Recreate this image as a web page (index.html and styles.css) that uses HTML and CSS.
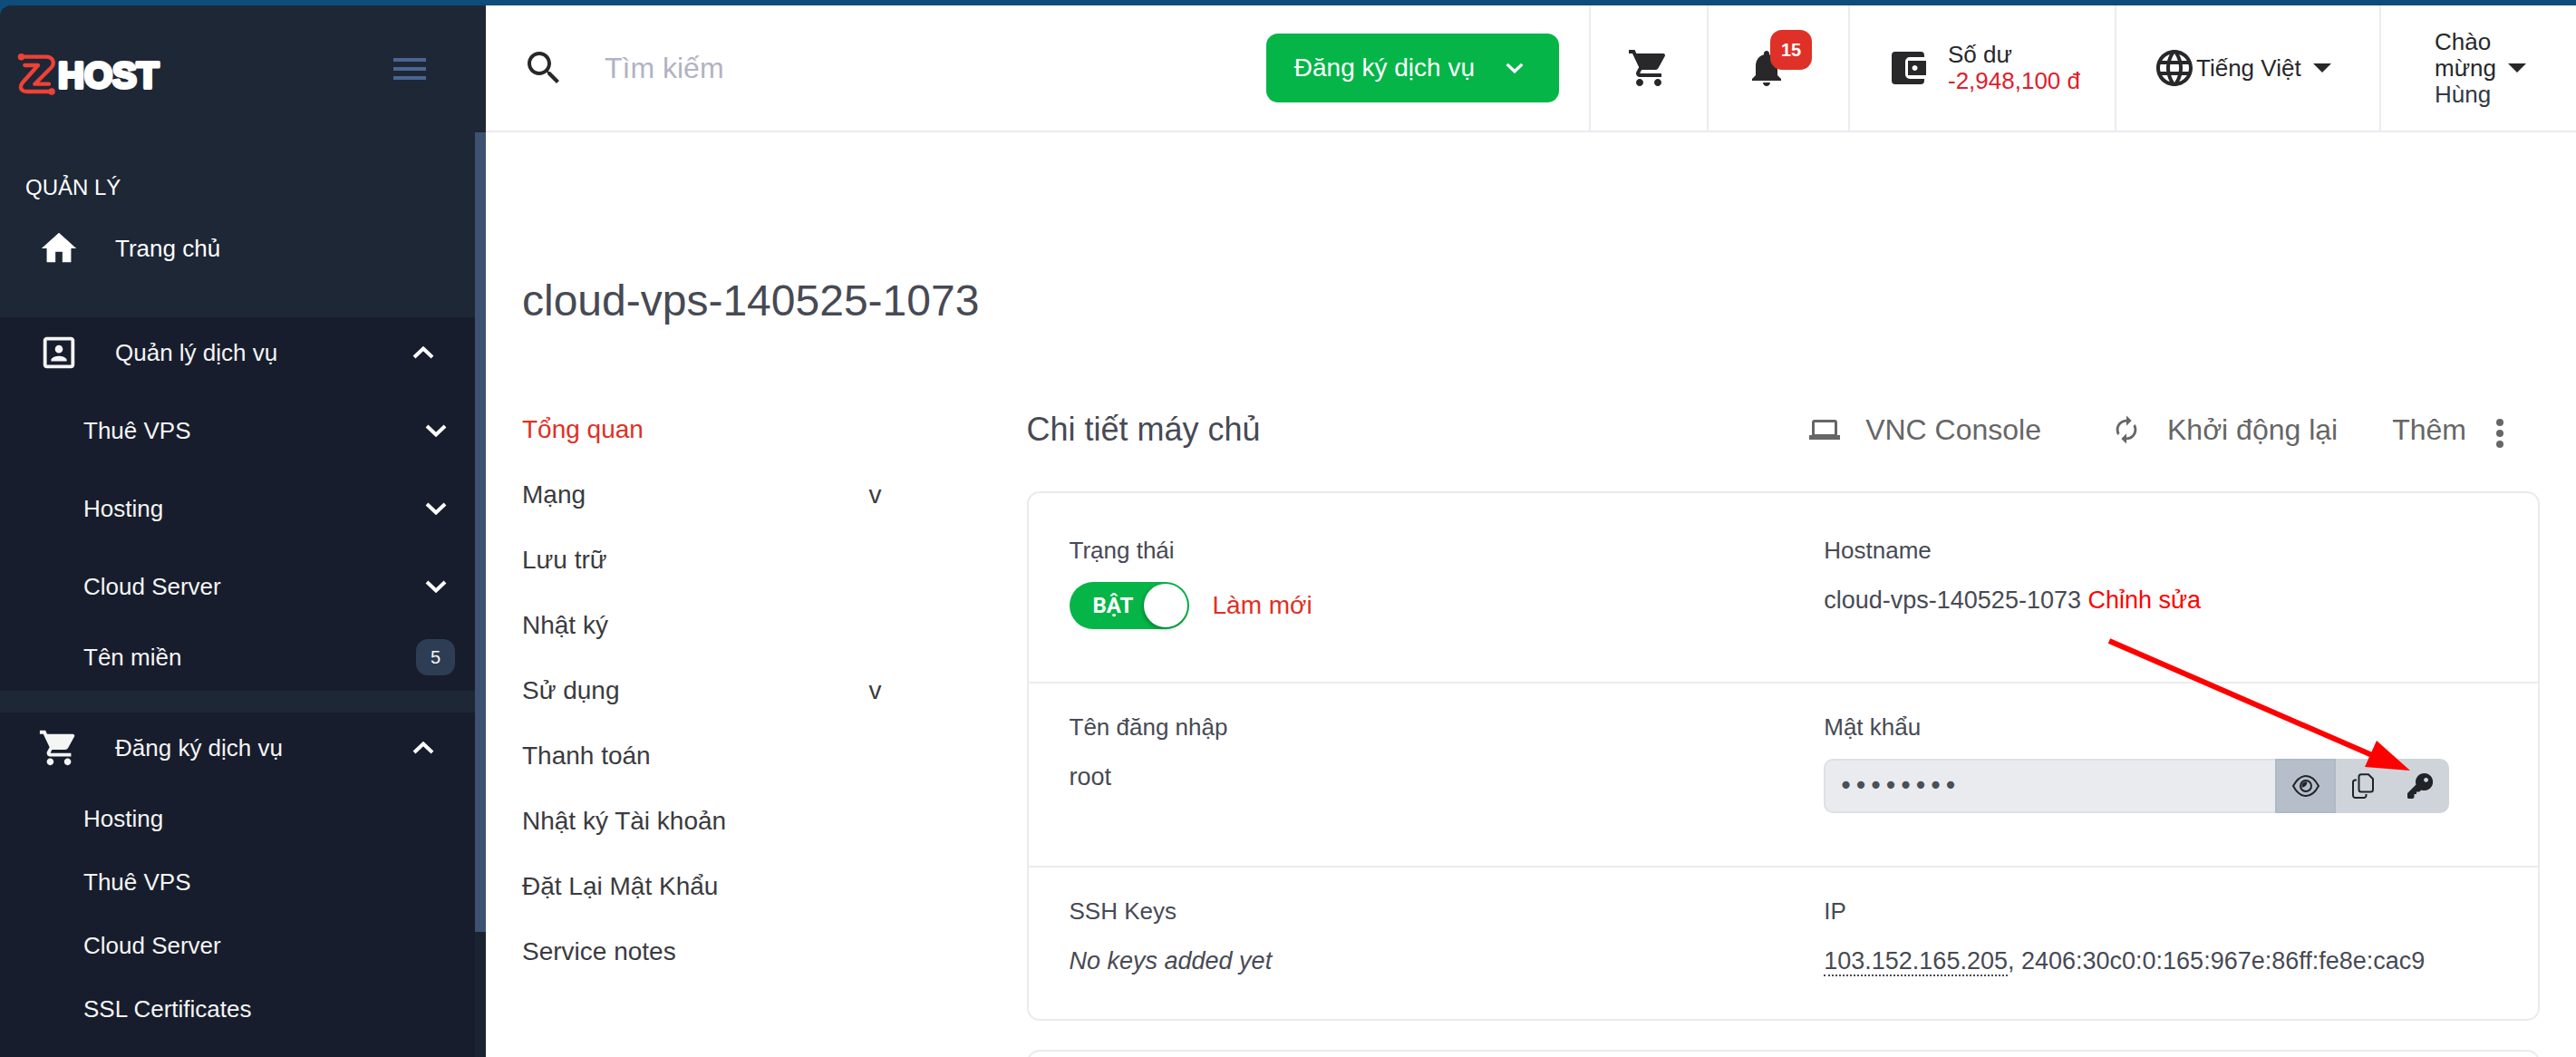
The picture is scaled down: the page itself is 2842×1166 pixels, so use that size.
FILE: index.html
```html
<!DOCTYPE html>
<html lang="vi">
<head>
    <meta charset="UTF-8">
    <meta name="viewport" content="width=device-width, initial-scale=1.0">
    <title>cloud-vps-140525-1073</title>
    <link rel="stylesheet" href="styles.css">
</head>
<body>
    <!-- Shared icons -->
    <svg class="icon-defs" aria-hidden="true">
        <symbol id="icon-cart" viewBox="0 0 24 24">
            <path d="M7 18c-1.1 0-1.99.9-1.99 2S5.9 22 7 22s2-.9 2-2-.9-2-2-2zM1 2v2h2l3.6 7.59-1.35 2.45c-.16.28-.25.61-.25.96 0 1.1.9 2 2 2h12v-2H7.42c-.14 0-.25-.11-.25-.25l.03-.12.9-1.63h7.45c.75 0 1.41-.41 1.75-1.03l3.58-6.49c.08-.14.12-.31.12-.48 0-.55-.45-1-1-1H5.21l-.94-2H1zm16 16c-1.1 0-1.99.9-1.99 2s.89 2 1.99 2 2-.9 2-2-.9-2-2-2z"/>
        </symbol>
        <symbol id="icon-down" viewBox="0 0 24 14">
            <path d="M2 2l10 9.5L22 2" fill="none" stroke="currentColor" stroke-width="4"/>
        </symbol>
        <symbol id="icon-up" viewBox="0 0 24 14">
            <path d="M2 12l10-9.5L22 12" fill="none" stroke="currentColor" stroke-width="4"/>
        </symbol>
        <symbol id="icon-caret" viewBox="0 0 20 10">
            <path d="M0 0h20L10 10z"/>
        </symbol>
    </svg>

    <div class="app">
        <!-- Sidebar -->
        <aside class="sidebar">
            <div class="sidebar-top">
                <a class="logo" href="#home">
                    <svg viewBox="0 0 164 48">
                        <g fill="none" stroke="#ef4136" stroke-width="4.3" stroke-linecap="round" stroke-linejoin="round">
                            <path d="M4 4.7H32C39 4.7 42 11 38 16L19.3 34.7H35"/>
                            <path d="M8.3 14H23L6 33C2 38 4 43 11 43H38"/>
                        </g>
                        <circle cx="4.5" cy="4.7" r="3.8" fill="#ef4136"/>
                        <circle cx="38" cy="43" r="3.8" fill="#ef4136"/>
                        <text class="logo-text" x="45" y="39">HOST</text>
                    </svg>
                </a>
                <button class="menu-toggle" type="button" aria-label="Menu"><span></span><span></span><span></span></button>
            </div>
            <div class="sidebar-body">
                <nav class="sidebar-nav">
                    <h2>QUẢN LÝ</h2>
                    <a class="nav-head nav-home" href="#home">
                        <svg class="nav-icon" viewBox="0 0 24 24" aria-hidden="true"><path d="M10 20v-6h4v6h5v-8h3L12 3 2 12h3v8z"/></svg>
                        <span>Trang chủ</span>
                    </a>
                    <div class="nav-group">
                        <a class="nav-head" href="#services">
                            <svg class="nav-icon" viewBox="0 0 24 24" aria-hidden="true"><path d="M12 12.25c1.24 0 2.25-1.01 2.25-2.25S13.24 7.75 12 7.75 9.75 8.76 9.75 10s1.01 2.25 2.25 2.25zm4.5 4c0-1.5-3-2.25-4.5-2.25s-4.5.75-4.5 2.25V17h9v-.75zM19 3H5c-1.1 0-2 .9-2 2v14c0 1.1.9 2 2 2h14c1.1 0 2-.9 2-2V5c0-1.1-.9-2-2-2zm0 16H5V5h14v14z"/></svg>
                            <span>Quản lý dịch vụ</span>
                            <svg class="chevron"><use href="#icon-up"/></svg>
                        </a>
                        <ul>
                            <li><a class="has-children" href="#vps">Thuê VPS <svg class="chevron"><use href="#icon-down"/></svg></a></li>
                            <li><a class="has-children" href="#hosting">Hosting <svg class="chevron"><use href="#icon-down"/></svg></a></li>
                            <li><a class="has-children" href="#cloud">Cloud Server <svg class="chevron"><use href="#icon-down"/></svg></a></li>
                            <li><a href="#domains">Tên miền <span class="count">5</span></a></li>
                        </ul>
                    </div>
                    <div class="nav-group">
                        <a class="nav-head" href="#order">
                            <svg class="nav-icon" aria-hidden="true"><use href="#icon-cart"/></svg>
                            <span>Đăng ký dịch vụ</span>
                            <svg class="chevron"><use href="#icon-up"/></svg>
                        </a>
                        <ul>
                            <li><a href="#order-hosting">Hosting</a></li>
                            <li><a href="#order-vps">Thuê VPS</a></li>
                            <li><a href="#order-cloud">Cloud Server</a></li>
                            <li><a href="#order-ssl">SSL Certificates</a></li>
                        </ul>
                    </div>
                </nav>
                <div class="scroll-track"><div class="scroll-thumb"></div></div>
            </div>
        </aside>

        <div class="page">
            <!-- Top bar -->
            <header class="topbar">
                <form class="search">
                    <label for="search-input">
                        <svg class="icon" viewBox="0 0 24 24" role="img" aria-label="Tìm kiếm"><path d="M15.5 14h-.79l-.28-.27C15.41 12.59 16 11.11 16 9.5 16 5.91 13.09 3 9.5 3S3 5.91 3 9.5 5.91 16 9.5 16c1.61 0 3.09-.59 4.23-1.57l.27.28v.79l5 4.99L20.49 19l-4.99-5zm-6 0C7.01 14 5 11.99 5 9.5S7.01 5 9.5 5 14 7.01 14 9.5 11.99 14 9.5 14z"/></svg>
                    </label>
                    <input type="text" id="search-input" placeholder="Tìm kiếm">
                </form>
                <button class="order-btn" type="button">Đăng ký dịch vụ <svg><use href="#icon-down"/></svg></button>
                <a class="cell cell-cart" href="#cart" aria-label="Cart"><svg class="icon"><use href="#icon-cart"/></svg></a>
                <a class="cell cell-bell" href="#notifications">
                    <svg class="icon" viewBox="0 0 24 24" aria-hidden="true"><path d="M12 22c1.1 0 2-.9 2-2h-4c0 1.1.89 2 2 2zm6-6v-5c0-3.07-1.64-5.64-4.5-6.32V4c0-.83-.67-1.5-1.5-1.5s-1.5.67-1.5 1.5v.68C7.63 5.36 6 7.92 6 11v5l-2 2v1h16v-1l-2-2z"/></svg>
                    <span class="bell-count">15</span>
                </a>
                <a class="cell cell-balance" href="#balance">
                    <svg viewBox="0 0 38 36" aria-hidden="true">
                        <path d="M4 0h28a4 4 0 0 1 4 4v2H20a5 5 0 0 0-5 5v14a5 5 0 0 0 5 5h16v2a4 4 0 0 1-4 4H4a4 4 0 0 1-4-4V4a4 4 0 0 1 4-4z"/>
                        <path fill-rule="evenodd" d="M18 10h20v16H18zM25.5 15a3 3 0 1 0 .1 0z"/>
                    </svg>
                    <span>Số dư<br><span class="amount">-2,948,100 đ</span></span>
                </a>
                <div class="cell cell-lang">
                    <label for="lang">
                        <svg class="icon" viewBox="0 0 24 24" role="img" aria-label="Ngôn ngữ"><path d="M11.99 2C6.47 2 2 6.48 2 12s4.47 10 9.99 10C17.52 22 22 17.52 22 12S17.52 2 11.99 2zm6.93 6h-2.95c-.32-1.25-.78-2.45-1.38-3.56 1.84.63 3.37 1.91 4.33 3.56zM12 4.04c.83 1.2 1.48 2.53 1.91 3.96h-3.82c.43-1.43 1.08-2.76 1.91-3.96zM4.26 14C4.1 13.36 4 12.69 4 12s.1-1.36.26-2h3.38c-.08.66-.14 1.32-.14 2s.06 1.34.14 2H4.26zm.82 2h2.95c.32 1.25.78 2.45 1.38 3.56-1.84-.63-3.37-1.9-4.33-3.56zm2.95-8H5.08c.96-1.66 2.49-2.93 4.33-3.56C8.81 5.55 8.35 6.75 8.03 8zM12 19.96c-.83-1.2-1.48-2.53-1.91-3.96h3.82c-.43 1.43-1.08 2.76-1.91 3.96zM14.34 14H9.66c-.09-.66-.16-1.32-.16-2s.07-1.35.16-2h4.68c.09.65.16 1.32.16 2s-.07 1.34-.16 2zm.25 5.56c.6-1.11 1.06-2.31 1.38-3.56h2.95c-.96 1.65-2.49 2.93-4.33 3.56zM16.36 14c.08-.66.14-1.32.14-2s-.06-1.34-.14-2h3.38c.16.64.26 1.31.26 2s-.1 1.36-.26 2h-3.38z"/></svg>
                    </label>
                    <select id="lang"><option>Tiếng Việt</option></select>
                    <svg class="caret" aria-hidden="true"><use href="#icon-caret"/></svg>
                </div>
                <button class="cell cell-user" type="button">
                    <span>Chào<br>mừng<br><span class="user-name">Hùng</span></span>
                    <svg class="caret" aria-hidden="true"><use href="#icon-caret"/></svg>
                </button>
            </header>

            <main class="content">
                <h1>cloud-vps-140525-1073</h1>
                <div class="columns">
                    <!-- Service menu -->
                    <nav class="service-menu">
                        <a class="active" href="#overview">Tổng quan</a>
                        <a href="#network">Mạng <span>v</span></a>
                        <a href="#storage">Lưu trữ</a>
                        <a href="#logs">Nhật ký</a>
                        <a href="#usage">Sử dụng <span>v</span></a>
                        <a href="#billing">Thanh toán</a>
                        <a href="#account-logs">Nhật ký Tài khoản</a>
                        <a href="#reset">Đặt Lại Mật Khẩu</a>
                        <a href="#notes">Service notes</a>
                    </nav>

                    <!-- Server details -->
                    <section>
                        <div class="section-head">
                            <h2>Chi tiết máy chủ</h2>
                            <div class="actions">
                                <button type="button">
                                    <svg viewBox="0 0 34 34" aria-hidden="true"><path fill-rule="evenodd" d="M6 6h22a3 3 0 0 1 3 3v14h3v5H0v-5h3V9a3 3 0 0 1 3-3zM6 9v13h22V9z"/></svg>
                                    VNC Console
                                </button>
                                <button type="button">
                                    <svg viewBox="0 0 24 24" aria-hidden="true"><path d="M12 6v3l4-4-4-4v3c-4.42 0-8 3.58-8 8 0 1.57.46 3.03 1.24 4.26L6.7 14.8c-.45-.83-.7-1.79-.7-2.8 0-3.31 2.69-6 6-6zm6.76 1.74L17.3 9.2c.44.84.7 1.79.7 2.8 0 3.31-2.69 6-6 6v-3l-4 4 4 4v-3c4.42 0 8-3.58 8-8 0-1.57-.46-3.03-1.24-4.26z"/></svg>
                                    Khởi động lại
                                </button>
                                <button class="more" type="button">
                                    Thêm
                                    <svg class="dots" viewBox="0 0 10 40" aria-hidden="true"><circle cx="5" cy="12" r="4"/><circle cx="5" cy="24" r="4"/><circle cx="5" cy="36" r="4"/></svg>
                                </button>
                            </div>
                        </div>

                        <div class="card">
                            <div class="row row-first">
                                <div class="field">
                                    <div class="label">Trạng thái</div>
                                    <div class="control status">
                                        <label class="switch">
                                            <input type="checkbox" aria-label="Trạng thái" checked>
                                            <span>BẬT</span>
                                        </label>
                                        <a href="#refresh">Làm mới</a>
                                    </div>
                                </div>
                                <div class="field">
                                    <div class="label">Hostname</div>
                                    <div class="value">cloud-vps-140525-1073 <a href="#edit">Chỉnh sửa</a></div>
                                </div>
                            </div>
                            <div class="row">
                                <div class="field">
                                    <div class="label">Tên đăng nhập</div>
                                    <div class="value">root</div>
                                </div>
                                <div class="field">
                                    <label class="label" for="password">Mật khẩu</label>
                                    <div class="control password">
                                        <input type="password" id="password" value="password" readonly>
                                        <button class="show-btn" type="button" aria-label="Show">
                                            <svg class="line-icon" width="32" height="32" viewBox="0 0 32 32">
                                                <path d="M2 16C6 8.5 10.500 5 16 5s10 3.500 14 11c-4 7.500-8.500 11-14 11S6 23.500 2 16z"/>
                                                <circle cx="16" cy="16" r="6"/>
                                                <path d="M11.500 15.500a4 4 0 0 0 4-4" stroke-width="4"/>
                                            </svg>
                                        </button>
                                        <button class="copy-btn" type="button" aria-label="Copy">
                                            <svg class="line-icon" width="24" height="28" viewBox="0 0 24 28">
                                                <path d="M10 1.200h8l5 5V18a2.500 2.500 0 0 1-2.500 2.500H10A2.500 2.500 0 0 1 7.500 18V3.700A2.500 2.500 0 0 1 10 1.200z"/>
                                                <path d="M5 7.500H3.500A2.500 2.500 0 0 0 1 10v14.500A2.500 2.500 0 0 0 3.500 27H13a2.500 2.500 0 0 0 2.500-2.500V23"/>
                                            </svg>
                                        </button>
                                        <button class="key-btn" type="button" aria-label="Key">
                                            <svg width="28" height="28" viewBox="0 0 28 28">
                                                <path fill-rule="evenodd" d="M18.500 0a9.500 9.500 0 1 1-3.200 18.400L13 20.500h-3V23H7.500v3.500L6 28H1l-1-1v-5l9.500-9.500A9.500 9.500 0 0 1 18.500 0zM20.500 5a2.400 2.400 0 1 0 .1 0z"/>
                                            </svg>
                                        </button>
                                        <svg class="arrow" width="338" height="152" viewBox="0 0 338 152" aria-hidden="true">
                                            <path d="M4 5L294 131" stroke="#f00" stroke-width="6"/>
                                            <path d="M299 115L336 148L286 144z" fill="#f00"/>
                                        </svg>
                                    </div>
                                </div>
                            </div>
                            <div class="row row-last">
                                <div class="field">
                                    <div class="label">SSH Keys</div>
                                    <div class="value"><em>No keys added yet</em></div>
                                </div>
                                <div class="field">
                                    <div class="label">IP</div>
                                    <div class="value"><span class="ip">103.152.165.205</span>, 2406:30c0:0:165:967e:86ff:fe8e:cac9</div>
                                </div>
                            </div>
                        </div>
                        <div class="card card-next"></div>
                    </section>
                </div>
            </main>
        </div>
    </div>
</body>
</html>
```

FILE: styles.css
```css
/* Global Styles */
* {
    box-sizing: border-box;
}

body {
    margin: 0;
    font-family: "Liberation Sans", Arial, sans-serif;
    font-size: 26px;
    line-height: 32px;
    color: #474a54;
    background-color: #0e4c7c;
}

a {
    color: inherit;
    text-decoration: none;
}

button, input, select {
    font: inherit;
    color: inherit;
    background: none;
    border: none;
    padding: 0;
    margin: 0;
    outline: none;
}

button {
    cursor: pointer;
}

h1, h2 {
    margin: 0;
    font-weight: normal;
}

ul {
    list-style: none;
    margin: 0;
    padding: 0;
}

svg {
    display: block;
    flex: none;
    fill: currentColor;
}

.icon-defs {
    display: none;
}

.line-icon {
    fill: none;
    stroke: currentColor;
    stroke-width: 2px;
}

.app {
    display: flex;
    height: 100vh;
    padding-top: 6px;
    overflow: hidden;
}

/* Sidebar */
.sidebar {
    display: flex;
    flex-direction: column;
    flex: none;
    width: 536px;
    color: #fff;
    background-color: #1e2736;
    border-top-left-radius: 12px;
}

.sidebar-top {
    display: flex;
    flex: none;
    justify-content: space-between;
    align-items: center;
    height: 140px;
    padding: 0 66px 0 19px;
}

.logo {
    padding-top: 12px;
}

.logo svg {
    width: 164px;
    height: 48px;
}

.logo-text {
    font-size: 40px;
    font-weight: bold;
    stroke: #fff;
    stroke-width: 4px;
    stroke-linejoin: round;
}

.menu-toggle {
    display: flex;
    flex-direction: column;
    gap: 6px;
}

.menu-toggle span {
    width: 36px;
    height: 4px;
    background-color: #4a6691;
}

.sidebar-body {
    display: flex;
    flex: 1;
    min-height: 0;
}

.sidebar-nav {
    flex: 1;
    overflow: hidden;
}

.sidebar-nav h2 {
    padding: 45px 28px 12px;
    font-size: 24px;
}

.nav-head {
    display: flex;
    align-items: center;
    gap: 39px;
    height: 78px;
    padding: 0 45px 0 42px;
}

.nav-home {
    margin-bottom: 37px;
}

.nav-icon {
    width: 46px;
    height: 46px;
}

.nav-group {
    margin-bottom: 24px;
    padding-bottom: 2px;
    color: #f5f5f5;
    background-color: #171d2c;
}

.nav-group:last-child {
    padding-bottom: 60px;
}

.nav-group ul {
    padding-top: 4px;
}

.nav-group li a {
    display: flex;
    justify-content: space-between;
    align-items: center;
    height: 70px;
    padding: 0 22px 0 92px;
}

.nav-group li .has-children {
    height: 86px;
}

.chevron {
    width: 24px;
    height: 14px;
    margin-left: auto;
    color: #fff;
}

.has-children .chevron {
    margin-right: 9px;
}

.count {
    width: 43px;
    border-radius: 13px;
    font-size: 20px;
    line-height: 40px;
    text-align: center;
    background-color: #2d3d54;
}

.scroll-track {
    width: 12px;
    background-color: #1a2431;
}

.scroll-thumb {
    height: calc(100% - 138px);
    background-color: #3d5171;
}

/* Top bar */
.page {
    flex: 1;
    min-width: 0;
    background-color: #fff;
    overflow: hidden;
}

.topbar {
    display: flex;
    align-items: center;
    height: 140px;
    border-bottom: 2px solid #ebebf0;
    color: #28282a;
}

.icon {
    width: 48px;
    height: 48px;
}

.search {
    display: flex;
    flex: 1;
    align-items: center;
    gap: 43px;
    padding-left: 40px;
}

.search input {
    flex: 1;
    min-width: 0;
    height: 48px;
    font-size: 32px;
}

.search input::placeholder {
    color: #b1b3c3;
}

.order-btn {
    display: flex;
    align-items: center;
    gap: 34px;
    height: 76px;
    margin-right: 33px;
    padding: 0 39px 0 31px;
    border-radius: 13px;
    font-size: 28px;
    color: #fff;
    background-color: #05b548;
}

.order-btn svg {
    width: 20px;
    height: 12px;
}

.cell {
    display: flex;
    flex: none;
    align-items: center;
    align-self: stretch;
    border-left: 2px solid #ebebf0;
    line-height: 29px;
}

.cell-cart {
    width: 130px;
    padding-left: 40px;
}

.cell-bell {
    position: relative;
    width: 156px;
    padding-left: 40px;
}

.bell-count {
    position: absolute;
    top: 27px;
    left: 68px;
    width: 46px;
    border-radius: 13px;
    font-size: 20px;
    font-weight: bold;
    line-height: 44px;
    text-align: center;
    color: #fff;
    background-color: #df3127;
}

.cell-balance {
    width: 294px;
    gap: 24px;
    padding-left: 46px;
}

.cell-balance svg {
    width: 38px;
    height: 36px;
}

.amount {
    color: #e0202c;
}

.cell-lang {
    width: 292px;
    padding-left: 40px;
}

.cell-lang select {
    appearance: none;
    cursor: pointer;
}

.caret {
    width: 20px;
    height: 10px;
    margin-left: 13px;
}

.cell-user {
    width: 217px;
    padding-left: 59px;
    text-align: left;
}

.user-name {
    color: #2f3a45;
}

/* Content */
.content {
    padding: 158px 40px 0;
}

h1 {
    margin-bottom: 78px;
    font-size: 48px;
    line-height: 56px;
}

.columns {
    display: grid;
    grid-template-columns: 1fr 3fr;
}

.service-menu {
    padding-right: 160px;
    font-size: 28px;
    line-height: 72px;
    color: #3a3b3e;
}

.service-menu a {
    display: flex;
    justify-content: space-between;
}

.service-menu .active {
    color: #e03024;
}

.section-head {
    display: flex;
    justify-content: space-between;
    align-items: center;
    height: 72px;
    margin-bottom: 32px;
    padding-right: 39px;
}

.section-head h2 {
    font-size: 36px;
}

.actions {
    display: flex;
    gap: 77px;
    font-size: 32px;
    color: #666;
}

.actions button {
    display: flex;
    align-items: center;
    gap: 28px;
}

.actions svg {
    width: 34px;
    height: 34px;
}

.actions .more {
    gap: 32px;
    margin-left: -17px;
}

.actions .dots {
    width: 10px;
    height: 40px;
}

/* Cards */
.card {
    border: 2px solid #ebebee;
    border-radius: 14px;
}

.card-next {
    height: 200px;
    margin-top: 32px;
}

.row {
    display: grid;
    grid-template-columns: 1fr 1fr;
    padding: 32px 0 58px;
    border-bottom: 2px solid #ebebee;
}

.row-first {
    padding-top: 47px;
}

.row-last {
    padding-bottom: 48px;
    border-bottom: none;
}

.field {
    padding-left: 45px;
}

.label {
    display: block;
}

.value {
    margin-top: 23px;
    font-size: 27px;
}

.value a {
    color: #f00;
}

.ip {
    border-bottom: 2px dotted #474a54;
}

.control {
    display: flex;
    margin-top: 19px;
}

.status {
    align-items: center;
    gap: 26px;
    font-size: 28px;
    color: #e03024;
}

/* Power switch */
.switch {
    position: relative;
    width: 132px;
    height: 52px;
    padding-left: 26px;
    border-radius: 26px;
    font-family: Roboto, sans-serif;
    font-size: 24px;
    font-weight: bold;
    line-height: 52px;
    color: #fff;
    background-color: #05b548;
    cursor: pointer;
}

.switch input {
    position: absolute;
    opacity: 0;
}

.switch::after {
    content: "";
    position: absolute;
    top: 2px;
    right: 2px;
    width: 48px;
    height: 48px;
    border-radius: 50%;
    background-color: #fff;
    box-shadow: -1px 2px 4px rgba(0, 0, 0, 0.3);
}

/* Password */
.password {
    position: relative;
    height: 60px;
    padding-right: 98px;
    color: #202328;
}

.password input {
    flex: 1;
    min-width: 0;
    padding-left: 14px;
    border: 2px solid #dde0e5;
    border-right: none;
    border-radius: 10px 0 0 10px;
    font-family: "DejaVu Sans", sans-serif;
    font-size: 28px;
    color: #495057;
    background-color: #eaebef;
}

.password button {
    display: flex;
    justify-content: center;
    align-items: center;
    background-color: #cfd4db;
}

.password .show-btn {
    width: 67px;
    border: 2px solid #aebac5;
    background-color: #b6bfc9;
}

.password .copy-btn {
    width: 60px;
}

.password .key-btn {
    width: 65px;
    border-radius: 0 10px 10px 0;
}

.arrow {
    position: absolute;
    top: -135px;
    right: 139px;
    pointer-events: none;
}
```
